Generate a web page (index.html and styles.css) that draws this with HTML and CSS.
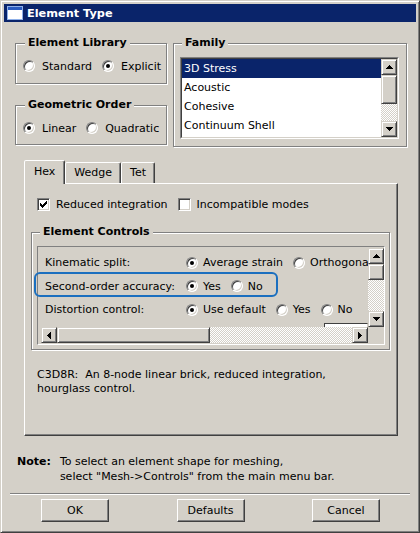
FILE: index.html
```html
<!DOCTYPE html>
<html lang="en">
<head>
  <meta charset="UTF-8" />
  <meta name="viewport" content="width=device-width, initial-scale=1.0"/>
  <title>Element Type</title>
  <link rel="stylesheet" href="styles.css">
</head>
<body>
  <div class="window">

    <!-- Title bar -->
    <div class="titlebar">
      <svg class="app-icon" width="16" height="14" viewBox="0 0 16 14">
        <rect x="0.5" y="0.5" width="15" height="13" fill="#fff" stroke="#8fb0e8"/>
        <rect x="1" y="1" width="14" height="3" fill="#2a5bc0"/>
      </svg>
      <span>Element Type</span>
    </div>

    <div class="content">

      <!-- Library / order / family -->
      <div class="top">
        <div class="left-col">
          <fieldset class="group lib">
            <legend>Element Library</legend>
            <div class="opts">
              <label class="opt"><span class="radio"></span>Standard</label>
              <label class="opt"><span class="radio on"></span>Explicit</label>
            </div>
          </fieldset>
          <fieldset class="group order">
            <legend>Geometric Order</legend>
            <div class="opts">
              <label class="opt"><span class="radio on"></span>Linear</label>
              <label class="opt"><span class="radio"></span>Quadratic</label>
            </div>
          </fieldset>
        </div>

        <fieldset class="group family">
          <legend>Family</legend>
          <div class="listbox">
            <div class="listbox-in">
              <ul class="items">
                <li class="sel">3D Stress</li>
                <li>Acoustic</li>
                <li>Cohesive</li>
                <li>Continuum Shell</li>
              </ul>
              <div class="vscroll list-scroll">
                <div class="sb-btn"><svg width="7" height="4" viewBox="0 0 7 4"><path d="M3 0h1v1h1v1h1v1h1v1H0V3h1V2h1V1h1z"/></svg></div>
                <div class="sb-thumb"></div>
                <div class="sb-track"></div>
                <div class="sb-btn"><svg width="7" height="4" viewBox="0 0 7 4"><path d="M0 0h7v1h-1v1h-1v1h-1v1h-1V3H2V2H1V1H0z"/></svg></div>
              </div>
            </div>
          </div>
        </fieldset>
      </div>

      <!-- Tabs -->
      <div class="tabs">
        <div class="tab active">Hex</div>
        <div class="tab">Wedge</div>
        <div class="tab">Tet</div>
      </div>

      <div class="panel">
        <div class="checks">
          <label class="opt"><span class="check"><svg width="7" height="7" viewBox="0 0 7 7"><path d="M0 2h1v1h1v1h1V3h1V2h1V1h1V0h1v3h-1v1h-1v1h-1v1h-1v1H2V6H1V5H0z"/></svg></span>Reduced integration</label>
          <label class="opt"><span class="check"></span>Incompatible modes</label>
        </div>

        <fieldset class="group controls">
          <legend>Element Controls</legend>
          <div class="scrollview">
            <div class="sv-rows">
              <div class="row">
                <span class="row-label">Kinematic split:</span>
                <label class="opt"><span class="radio on"></span>Average strain</label>
                <label class="opt"><span class="radio"></span>Orthogonal</label>
              </div>
              <div class="row">
                <span class="row-label">Second-order accuracy:</span>
                <label class="opt"><span class="radio on"></span>Yes</label>
                <label class="opt"><span class="radio"></span>No</label>
              </div>
              <div class="row">
                <span class="row-label">Distortion control:</span>
                <label class="opt"><span class="radio on"></span>Use default</label>
                <label class="opt"><span class="radio"></span>Yes</label>
                <label class="opt"><span class="radio"></span>No</label>
              </div>
              <div class="row sub">
                <span class="field"></span>
              </div>
            </div>
            <div class="vscroll sv-v">
              <div class="sb-btn"><svg width="7" height="4" viewBox="0 0 7 4"><path d="M3 0h1v1h1v1h1v1h1v1H0V3h1V2h1V1h1z"/></svg></div>
              <div class="sb-thumb"></div>
              <div class="sb-track"></div>
              <div class="sb-btn"><svg width="7" height="4" viewBox="0 0 7 4"><path d="M0 0h7v1h-1v1h-1v1h-1v1h-1V3H2V2H1V1H0z"/></svg></div>
            </div>
            <div class="hscroll">
              <div class="sb-btn"><svg width="4" height="7" viewBox="0 0 4 7"><path d="M3 0h1v7h-1v-1h-1v-1h-1v-1H0V3h1V2h1V1h1z"/></svg></div>
              <div class="sb-thumb"></div>
              <div class="sb-track"></div>
              <div class="sb-btn"><svg width="4" height="7" viewBox="0 0 4 7"><path d="M0 0h1v1h1v1h1v1h1v1H3v1H2v1H1v1H0z"/></svg></div>
            </div>
            <div class="corner"></div>
          </div>
        </fieldset>

        <p class="desc">C3D8R:&nbsp; An 8-node linear brick, reduced integration,<br>hourglass control.</p>

        <!-- highlight around the second-order row -->
        <div class="highlight"></div>
      </div>

      <div class="note">
        <b>Note:</b>
        <span>To select an element shape for meshing,<br>select "Mesh-&gt;Controls" from the main menu bar.</span>
      </div>

      <div class="sep"></div>

      <div class="buttons">
        <button class="btn">OK</button>
        <button class="btn">Defaults</button>
        <button class="btn">Cancel</button>
      </div>
    </div>
  </div>
</body>
</html>
```

FILE: styles.css
```css
* {
  box-sizing: border-box;
}

body {
  margin: 0;
  font-family: "DejaVu Sans", Verdana, sans-serif;
  font-size: 11px;
  color: #000;
  background: #d4d0c8;
}

.window {
  width: 420px;
  height: 533px;
  background: #d4d0c8;
  border: 1px solid;
  border-color: #d4d0c8 #404040 #404040 #d4d0c8;
  box-shadow: inset 1px 1px #fff, inset -1px -1px #808080;
  padding: 3px;
  display: flex;
  flex-direction: column;
}

/* Title bar */
.titlebar {
  height: 18px;
  background: #0a246a;
  color: #fff;
  font-weight: bold;
  font-size: 11.3px;
  display: flex;
  align-items: center;
  gap: 4px;
  padding-left: 3px;
}

.app-icon {
  display: block;
}

.content {
  flex: 1;
  padding: 13px 9px 0 11px;
  display: flex;
  flex-direction: column;
}

/* Group boxes */
.group {
  margin: 0;
  min-width: 0;
  border: 1px solid #808080;
  box-shadow: inset 1px 1px #fff, 1px 1px #fff;
}

.group legend {
  font-weight: bold;
  line-height: 16px;
  padding: 0 3px;
  margin-left: 2px;
  background: #d4d0c8;
}

.top {
  display: flex;
  align-items: flex-start;
  gap: 6px;
}

.left-col {
  width: 152px;
  display: flex;
  flex-direction: column;
  gap: 13px;
}

.lib {
  padding: 7px 6px 9px 7px;
}

.order {
  padding: 7px 6px 8px 7px;
}

.opts {
  display: flex;
  gap: 10px;
  height: 16px;
  align-items: center;
}

.opt {
  display: flex;
  align-items: center;
  gap: 7px;
  white-space: nowrap;
}

.radio {
  flex: none;
  position: relative;
  width: 12px;
  height: 12px;
  border-radius: 50%;
  background: #fff;
  border: 1px solid;
  border-color: #808080 #fff #fff #808080;
  box-shadow: inset 1px 1px #404040, inset -1px -1px #d4d0c8;
}

.radio.on::after {
  content: "";
  position: absolute;
  left: 3px;
  top: 3px;
  width: 4px;
  height: 4px;
  border-radius: 50%;
  background: #000;
}

.check {
  flex: none;
  width: 13px;
  height: 13px;
  background: #fff;
  border: 1px solid;
  border-color: #808080 #fff #fff #808080;
  box-shadow: inset 1px 1px #404040, inset -1px -1px #d4d0c8;
  display: flex;
  align-items: center;
  justify-content: center;
}

/* Family list */
.family {
  width: 234px;
  padding: 6px 7px 7px 6px;
}

.listbox {
  height: 82px;
  border: 1px solid;
  border-color: #808080 #fff #fff #808080;
}

.listbox-in {
  height: 100%;
  border: 1px solid;
  border-color: #404040 #d4d0c8 #d4d0c8 #404040;
  background: #fff;
  display: flex;
}

.items {
  list-style: none;
  margin: 0;
  padding: 0;
  flex: 1;
}

.items li {
  height: 19px;
  line-height: 19px;
  padding-left: 2px;
}

.items li.sel {
  background: #0a246a;
  color: #fff;
}

/* Scrollbars */
.vscroll {
  width: 16px;
  display: flex;
  flex-direction: column;
  background: #d4d0c8;
}

.hscroll {
  height: 16px;
  display: flex;
  background: #d4d0c8;
}

.sb-btn,
.sb-thumb {
  flex: none;
  background: #d4d0c8;
  border: 1px solid;
  border-color: #d4d0c8 #404040 #404040 #d4d0c8;
  box-shadow: inset 1px 1px #fff, inset -1px -1px #808080;
}

.sb-btn {
  width: 16px;
  height: 16px;
  display: flex;
  align-items: center;
  justify-content: center;
}

.sb-btn svg {
  display: block;
}

.sb-track {
  flex: 1;
  background: conic-gradient(#fff 0 25%, #d4d0c8 0 50%, #fff 0 75%, #d4d0c8 0) 0 0 / 2px 2px;
}

.list-scroll .sb-thumb {
  height: 29px;
}

.sv-v .sb-thumb {
  height: 16px;
}

.hscroll .sb-thumb {
  width: 153px;
  height: 16px;
}

/* Tabs */
.tabs {
  display: flex;
  align-items: flex-end;
  margin: 13px 0 0 9px;
  height: 23px;
}

.tab {
  height: 21px;
  line-height: 20px;
  padding: 0 8px;
  border: 1px solid;
  border-bottom: none;
  border-color: #fff #404040 transparent #fff;
  border-radius: 2px 2px 0 0;
  box-shadow: inset -1px 0 #808080;
  background: #d4d0c8;
}

.tab.active {
  position: relative;
  z-index: 1;
  height: 24px;
  margin-bottom: -1px;
  padding: 0 9px;
  line-height: 22px;
}

.panel {
  position: relative;
  height: 253px;
  margin: 0 9px 0 9px;
  border: 1px solid;
  border-color: #fff #404040 #404040 #fff;
  box-shadow: inset -1px -1px #808080;
  padding: 14px 7px 0 6px;
}

.checks {
  display: flex;
  gap: 10px;
  height: 13px;
  align-items: center;
  margin-left: 6px;
}

.checks .opt {
  gap: 6px;
}

.controls {
  margin-top: 13px;
  padding: 6px 4px 4px 5px;
}

.controls legend {
  margin-left: 3px;
}

.scrollview {
  height: 99px;
  border: 1px solid;
  border-color: #808080 #fff #fff #808080;
  padding: 1px 0 1px 3px;
  display: grid;
  grid-template-columns: 1fr 16px;
  grid-template-rows: 1fr 16px;
}

.sv-rows {
  overflow: hidden;
  padding: 3px 0 0 4px;
}

.row {
  display: flex;
  align-items: center;
  gap: 10px;
  height: 23.5px;
  white-space: nowrap;
}

.row .opt {
  gap: 5px;
}

.row-label {
  flex: none;
  width: 131px;
}

.row.sub {
  align-items: flex-start;
  padding-top: 1.5px;
  height: 28px;
}

.field {
  margin-left: 279px;
  width: 60px;
  height: 21px;
  background: #fff;
  border: 1px solid;
  border-color: #404040 #d4d0c8 #d4d0c8 #404040;
}

.corner {
  background: #d4d0c8;
}

.desc {
  margin: 18px 0 0 6px;
  line-height: 14px;
}

.highlight {
  position: absolute;
  left: 9px;
  top: 88px;
  width: 244px;
  height: 25px;
  border: 2px solid #1b6fbf;
  border-radius: 6px;
}

/* Note & buttons */
.note {
  display: flex;
  gap: 9px;
  margin: 18px 0 0 2px;
  line-height: 15px;
}

.sep {
  margin: 9px -3px 0 -5px;
  border-top: 1px solid #808080;
  border-bottom: 1px solid #fff;
}

.buttons {
  display: flex;
  justify-content: space-between;
  padding: 0 27px 0 26px;
  margin-top: 4px;
}

.btn {
  width: 68px;
  height: 23px;
  font: inherit;
  color: #000;
  background: #d4d0c8;
  border: 1px solid;
  border-color: #fff #404040 #404040 #fff;
  box-shadow: inset -1px -1px #808080;
  padding: 0;
}
```
